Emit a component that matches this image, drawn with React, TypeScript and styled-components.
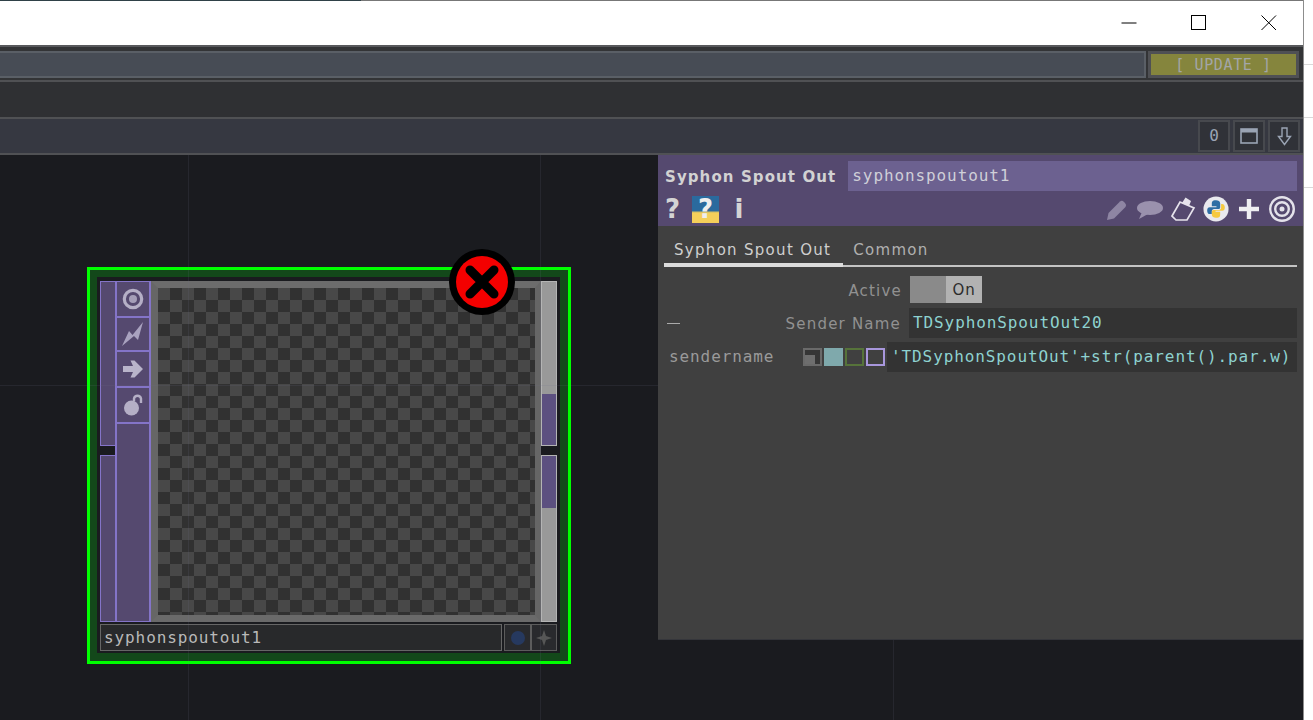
import React from "react"
import styled, { createGlobalStyle } from "styled-components"

const sans = `"DejaVu Sans", "Liberation Sans", sans-serif`
const mono = `"DejaVu Sans Mono", "Liberation Mono", monospace`

const GlobalStyle = createGlobalStyle`
  html, body { margin: 0; padding: 0; height: 720px; overflow: hidden; background: #fff; }
  #root { height: 720px; }
`

const Page = styled.div`
  display: flex;
  width: 1313px;
  height: 720px;
  overflow: hidden;
  background: #fff;
`
const Gutter = styled.div`
  flex: 1;
  display: flex;
  flex-direction: column;
`
const GutterRow = styled.div<{ $h: number }>`
  height: ${(p) => p.$h}px;
  box-sizing: border-box;
  border-bottom: 1px solid #d9d9d9;
`
const Window = styled.div`
  width: 1304px;
  height: 720px;
  flex: none;
  display: flex;
  flex-direction: column;
  box-sizing: border-box;
  border-right: 1px solid #8d8d8d;
`
const TitleBar = styled.div`
  height: 45px;
  flex: none;
  box-sizing: border-box;
  background: linear-gradient(to right, #2f4148 361px, #777 361px) top / 100% 1px no-repeat #fff;
  display: flex;
  justify-content: flex-end;
  align-items: center;
  padding-right: 26px;
  gap: 54px;
`
const WinIcon = styled.svg`
  width: 16px;
  height: 16px;
  display: block;
`
const ToolRowOne = styled.div`
  height: 35px;
  flex: none;
  box-sizing: border-box;
  background: #333436;
  border-top: 2px solid #58595c;
  padding: 4px 4px 0 0;
  display: flex;
  gap: 2px;
`
const PathField = styled.div`
  flex: 1;
  height: 27px;
  box-sizing: border-box;
  background: #474c55;
  border: 2px solid #5a5f66;
  border-left: none;
`
const UpdateButton = styled.div`
  width: 151px;
  height: 27px;
  box-sizing: border-box;
  border: 3px solid #4f5054;
  background: #85853d;
  color: #a3a6a8;
  font: 15px/23px ${mono};
  letter-spacing: 0.6px;
  text-align: center;
`
const ToolRowTwo = styled.div`
  height: 37px;
  flex: none;
  box-sizing: border-box;
  background: #2f3033;
  border-top: 2px solid #505154;
`
const ToolRowThree = styled.div`
  height: 38px;
  flex: none;
  box-sizing: border-box;
  background: #363841;
  border-top: 2px solid #505154;
  border-bottom: 2px solid #505154;
  padding: 1px 3px 0 0;
  display: flex;
  justify-content: flex-end;
  gap: 3px;
`
const ToolButton = styled.div`
  width: 32px;
  height: 32px;
  box-sizing: border-box;
  border: 2px solid #47494e;
  background: #303238;
  color: #9aa4b4;
  font: 16px/28px ${mono};
  text-align: center;
  display: flex;
  align-items: center;
  justify-content: center;
`
const Canvas = styled.div`
  position: relative;
  flex: 1;
  background: #1a1b1f;
  overflow: hidden;
`
const VLine = styled.div<{ $x: number }>`
  position: absolute;
  left: ${(p) => p.$x}px;
  top: 0;
  bottom: 0;
  width: 1px;
  background: rgba(110, 110, 145, 0.14);
  z-index: 2;
`
const HLine = styled.div<{ $y: number }>`
  position: absolute;
  top: ${(p) => p.$y}px;
  left: 0;
  right: 0;
  height: 1px;
  background: rgba(110, 110, 145, 0.14);
  z-index: 2;
`

/* operator node */
const Node = styled.div`
  position: absolute;
  left: 87px;
  top: 112px;
  width: 484px;
  height: 397px;
  box-sizing: border-box;
  border: 3px solid #00ff00;
  padding: 7px 8px 8px 7px;
  background: #13481a;
  z-index: 1;
`
const NodeInner = styled.div`
  height: 100%;
  box-sizing: border-box;
  background: #1a1b1f;
  padding: 4px 3px 2px;
  display: flex;
  flex-direction: column;
  gap: 2px;
`
const NodeBody = styled.div`
  height: 341px;
  display: grid;
  grid-template-columns: 15px 36px 390px 16px;
`
const Connectors = styled.div`
  display: flex;
  flex-direction: column;
  gap: 9px;
`
const InputTab = styled.div<{ $h: number }>`
  height: ${(p) => p.$h}px;
  box-sizing: border-box;
  background: #55496f;
  border: 1px solid #8474c8;
  border-right: none;
`
const OutputTab = styled.div<{ $h: number; $top: boolean }>`
  height: ${(p) => p.$h}px;
  box-sizing: border-box;
  background: #999;
  border: 1px solid #b4b4b4;
  display: flex;
  flex-direction: column;
  justify-content: ${(p) => (p.$top ? "flex-start" : "flex-end")};
`
const OutputFill = styled.div<{ $h: number }>`
  height: ${(p) => p.$h}px;
  background: #5c5080;
`
const IconColumn = styled.div`
  background: #55496f;
  border: solid #8474c8;
  border-width: 1px 2px 1px 2px;
  box-sizing: border-box;
  display: flex;
  flex-direction: column;
`
const IconCell = styled.div<{ $h: number }>`
  height: ${(p) => p.$h}px;
  flex: none;
  box-sizing: border-box;
  border-bottom: 2px solid #8474c8;
  display: flex;
  align-items: center;
  justify-content: center;
`
const Viewer = styled.div`
  box-sizing: border-box;
  border: solid #666;
  border-width: 7px 6px 7px 7px;
  border-top-color: #6c6c6c;
  border-bottom-color: #6a6a6a;
`
const Checker = styled.div`
  height: 100%;
  background: repeating-conic-gradient(#313131 0 25%, #484848 0 50%) 0 0 / 24px 24px;
`
const NodeFooter = styled.div`
  height: 27px;
  display: flex;
`
const NodeName = styled.div`
  width: 402px;
  margin-right: 2px;
  box-sizing: border-box;
  border: 1px solid #666;
  background: #28292b;
  color: #b9b9b9;
  font: 16px/25px ${mono};
  letter-spacing: 0.9px;
  padding-left: 3px;
`
const FooterButton = styled.div<{ $w: number }>`
  width: ${(p) => p.$w}px;
  box-sizing: border-box;
  border: 1px solid #5c5c5c;
  background: #292a2d;
  display: flex;
  align-items: center;
  justify-content: center;
`
const BlueDot = styled.div`
  width: 14px;
  height: 14px;
  border-radius: 50%;
  background: #26395f;
`
const ErrorBadge = styled.svg`
  position: absolute;
  left: 449px;
  top: 94px;
  width: 66px;
  height: 66px;
  z-index: 3;
`

/* parameter dialog */
const Panel = styled.div`
  position: absolute;
  left: 658px;
  top: 0;
  width: 645px;
  height: 485px;
  background: #404040;
  border-bottom: 1px solid #35363b;
  box-sizing: border-box;
  z-index: 4;
  display: flex;
  flex-direction: column;
`
const PanelHeader = styled.div`
  height: 71px;
  flex: none;
  box-sizing: border-box;
  background: #55496f;
  padding: 5px 6px 0 7px;
`
const TitleRow = styled.div`
  display: flex;
  align-items: center;
  height: 31px;
  gap: 12px;
`
const PanelTitle = styled.div`
  color: #d2d2d2;
  font: bold 15px/30px ${sans};
  letter-spacing: 1.1px;
  white-space: nowrap;
  padding-top: 3px;
`
const NameField = styled.div`
  flex: 1;
  height: 30px;
  background: #6c6190;
  color: #cfcfd8;
  font: 16px/30px ${mono};
  letter-spacing: 0.9px;
  padding-left: 4px;
`
const IconRow = styled.div`
  display: flex;
  align-items: center;
  justify-content: space-between;
  height: 34px;
  padding: 2px 2px 0 0;
  box-sizing: border-box;
`
const IconGroup = styled.div`
  display: flex;
  align-items: center;
`
const HelpGlyph = styled.span<{ $w: number }>`
  width: ${(p) => p.$w}px;
  color: #d4d4d4;
  font: bold 26px/30px ${sans};
  text-align: center;
`
const PythonHelp = styled.span`
  width: 27px;
  height: 27px;
  margin: 0 0 0 12px;
  background: linear-gradient(to bottom, #2a6a9e 0 54%, #f4cf5a 62% 100%);
  color: #eee;
  font: bold 26px/27px ${sans};
  text-align: center;
`
const HeaderIcon = styled.svg`
  width: 26px;
  height: 26px;
  margin-left: 7px;
  display: block;
`
const TabBar = styled.div`
  height: 41px;
  flex: none;
  margin: 0 6px;
  display: flex;
  align-items: flex-end;
  box-sizing: border-box;
  border-bottom: 2px solid #c4c4c4;
`
const Tab = styled.div<{ $active?: boolean }>`
  position: relative;
  height: 30px;
  padding: 0 12px 0 10px;
  color: ${(p) => (p.$active ? "#cfcfcf" : "#b0b0b0")};
  font: 15px/30px ${sans};
  letter-spacing: 1.3px;
  box-sizing: border-box;
  &::after {
    content: "";
    display: ${(p) => (p.$active ? "block" : "none")};
    position: absolute;
    left: 0;
    right: 0;
    bottom: -2px;
    height: 4px;
    background: #dcdcdc;
  }
`
const ParamRow = styled.div<{ $mt: number }>`
  display: flex;
  align-items: center;
  margin-top: ${(p) => p.$mt}px;
  margin-right: 6px;
`
const ParamLabel = styled.div<{ $w: number; $dy: number }>`
  width: ${(p) => p.$w}px;
  height: 27px;
  flex: none;
  box-sizing: border-box;
  text-align: right;
  color: #919191;
  font: 15px/26px ${sans};
  letter-spacing: 1.2px;
  white-space: nowrap;
  padding-top: ${(p) => p.$dy}px;
`
const Toggle = styled.div`
  margin-left: 8px;
  width: 72px;
  height: 27px;
  display: flex;
  background: #8a8a8a;
  justify-content: flex-end;
`
const ToggleOn = styled.div`
  width: 36px;
  background: #b2b2b2;
  color: #2c2c2c;
  font: 15px/28px ${sans};
  letter-spacing: 0.8px;
  text-align: center;
`
const ValueField = styled.div<{ $ml: number }>`
  flex: 1;
  height: 30px;
  margin-left: ${(p) => p.$ml}px;
  background: #333;
  color: #8ed2d0;
  font: 16px/30px ${mono};
  letter-spacing: 0.9px;
  padding-left: 4px;
  white-space: nowrap;
  overflow: hidden;
`
const Dash = styled.div`
  width: 13px;
  height: 1px;
  margin-left: 9px;
  flex: none;
  background: #aaa;
`
const ParamName = styled.div`
  width: 145px;
  flex: none;
  padding-left: 11px;
  box-sizing: border-box;
  color: #9a9a9a;
  font: 16px/30px ${mono};
  letter-spacing: 0.9px;
`
const ModeBoxes = styled.div`
  display: flex;
  gap: 2px;
`
const ModeBox = styled.div<{ $kind: "const" | "expr" | "bind" | "mode" }>`
  position: relative;
  width: 19px;
  height: 18px;
  box-sizing: border-box;
  border: 2px solid
    ${(p) => ({ const: "#6a6a6a", expr: "#7fa9ac", bind: "#56733a", mode: "#a897dc" })[p.$kind]};
  background: ${(p) => (p.$kind === "expr" ? "#7fa9ac" : p.$kind === "const" ? "#363636" : "transparent")};
  ${(p) =>
    p.$kind === "const" &&
    `
    &::after {
      content: "";
      position: absolute;
      left: 0;
      bottom: 0;
      width: 10px;
      height: 9px;
      background: #6e6e6e;
    }
  `}
`

export default function App() {
  return (
    <Page>
      <GlobalStyle />
      <Window>
        <TitleBar>
          <WinIcon viewBox="0 0 16 16">
            <path d="M0.5 8 H15.5" stroke="#000" strokeWidth="1" />
          </WinIcon>
          <WinIcon viewBox="0 0 16 16">
            <rect x="0.5" y="0.5" width="14" height="14" fill="none" stroke="#000" strokeWidth="1" />
          </WinIcon>
          <WinIcon viewBox="0 0 16 16">
            <path d="M0.5 0.5 L15 15 M15 0.5 L0.5 15" stroke="#000" strokeWidth="1" />
          </WinIcon>
        </TitleBar>
        <ToolRowOne>
          <PathField />
          <UpdateButton>[ UPDATE ]</UpdateButton>
        </ToolRowOne>
        <ToolRowTwo />
        <ToolRowThree>
          <ToolButton>0</ToolButton>
          <ToolButton>
            <svg width="18" height="16" viewBox="0 0 18 16">
              <rect x="1" y="1" width="16" height="14" fill="none" stroke="#9aa4b4" strokeWidth="1.6" />
              <rect x="1" y="1" width="16" height="3.5" fill="#9aa4b4" />
            </svg>
          </ToolButton>
          <ToolButton>
            <svg width="15" height="19" viewBox="0 0 15 19">
              <path d="M5 1 H10 V9.5 H13.5 L7.5 17.5 L1.5 9.5 H5 Z" fill="none" stroke="#9aa4b4" strokeWidth="1.4" />
            </svg>
          </ToolButton>
        </ToolRowThree>
        <Canvas>
          <VLine $x={188} />
          <VLine $x={540} />
          <VLine $x={893} />
          <HLine $y={230} />
          <Node>
            <NodeInner>
              <NodeBody>
                <Connectors>
                  <InputTab $h={165} />
                  <InputTab $h={167} />
                </Connectors>
                <IconColumn>
                  <IconCell $h={36}>
                    <svg width="22" height="22" viewBox="0 0 22 22">
                      <circle cx="11" cy="11" r="8.7" fill="none" stroke="#b5afc6" strokeWidth="3.2" />
                      <circle cx="11" cy="11" r="4" fill="#a59eb8" />
                    </svg>
                  </IconCell>
                  <IconCell $h={34}>
                    <svg width="24" height="26" viewBox="0 0 24 26">
                      <path d="M1 25 L8 10 L11.5 14 L22 1 L17 19 L13 15 Z" fill="#a9a2bf" />
                    </svg>
                  </IconCell>
                  <IconCell $h={36}>
                    <svg width="22" height="18" viewBox="0 0 22 18">
                      <path d="M1 6 H11 L8.5 0.5 H12.5 L21 9 L12.5 17.5 H8.5 L11 12 H1 Z" fill="#b9b4ca" />
                    </svg>
                  </IconCell>
                  <IconCell $h={36}>
                    <svg width="20" height="24" viewBox="0 0 20 24">
                      <path d="M11 8 V5.5 A3.6 3.6 0 0 1 18 5.5 V10" fill="none" stroke="#b5afc6" strokeWidth="2.4" />
                      <circle cx="8.5" cy="15" r="7.5" fill="#b5afc6" />
                    </svg>
                  </IconCell>
                </IconColumn>
                <Viewer>
                  <Checker />
                </Viewer>
                <Connectors>
                  <OutputTab $h={165} $top={false}>
                    <OutputFill $h={51} />
                  </OutputTab>
                  <OutputTab $h={167} $top>
                    <OutputFill $h={52} />
                  </OutputTab>
                </Connectors>
              </NodeBody>
              <NodeFooter>
                <NodeName>syphonspoutout1</NodeName>
                <FooterButton $w={27}>
                  <BlueDot />
                </FooterButton>
                <FooterButton $w={26}>
                  <svg width="16" height="16" viewBox="0 0 16 16">
                    <path d="M8 0 L10 6 L16 8 L10 10 L8 16 L6 10 L0 8 L6 6 Z" fill="#565656" />
                  </svg>
                </FooterButton>
              </NodeFooter>
            </NodeInner>
          </Node>
          <ErrorBadge viewBox="0 0 66 66">
            <circle cx="33" cy="33" r="33" fill="#000" />
            <circle cx="33" cy="33" r="26" fill="#f40000" />
            <path d="M21 21 L45 45 M45 21 L21 45" stroke="#000" strokeWidth="9" strokeLinecap="round" />
          </ErrorBadge>
          <Panel>
            <PanelHeader>
              <TitleRow>
                <PanelTitle>Syphon Spout Out</PanelTitle>
                <NameField>syphonspoutout1</NameField>
              </TitleRow>
              <IconRow>
                <IconGroup>
                  <HelpGlyph $w={15}>?</HelpGlyph>
                  <PythonHelp>?</PythonHelp>
                  <HelpGlyph $w={40}>i</HelpGlyph>
                </IconGroup>
                <IconGroup>
                  <HeaderIcon viewBox="0 0 26 26">
                    <path d="M3 24 L4.5 17 L16 5.5 Q18 4 20 6 L21 7 Q23 9 21.5 11 L10 22.5 Z" fill="#8e85a3" />
                  </HeaderIcon>
                  <HeaderIcon viewBox="0 0 26 26">
                    <ellipse cx="13" cy="12" rx="13" ry="7" fill="#9a91ad" />
                    <path d="M5 16 L2 23 L11 18 Z" fill="#9a91ad" />
                  </HeaderIcon>
                  <HeaderIcon viewBox="0 0 26 26">
                    <path d="M2 20 L10 6 L24 12 L17 24 L6 24 Z" fill="none" stroke="#e6e3ec" strokeWidth="1.7" />
                    <path d="M12 7 L15.5 1.5 L21 5 L19 10 Z" fill="#e6e3ec" />
                  </HeaderIcon>
                  <HeaderIcon viewBox="0 0 28 28">
                    <circle cx="14" cy="14" r="13.5" fill="#e9e9ee" />
                    <path d="M14 4.5 C9.5 4.5 9.5 6.5 9.5 9 V11 H14.5 V12 H7.5 C5 12 4.5 14 4.5 15.5 C4.5 18 5.5 19.5 7.5 19.5 H9.5 V16.5 C9.5 15 10.5 14 12 14 H16.5 C18 14 18.5 13 18.5 12 V8 C18.5 5.5 16.5 4.5 14 4.5 Z" fill="#2e6da4" />
                    <path d="M14 23.5 C18.5 23.5 18.5 21.5 18.5 19 V17 H13.5 V16 H20.5 C23 16 23.5 14 23.5 12.5 C23.5 10 22.5 8.5 20.5 8.5 H19.5 V12 C19.5 14 18.5 15 17 15 H11.5 C10 15 9.5 16 9.5 17 V20 C9.5 22.5 11.5 23.5 14 23.5 Z" fill="#f6c93f" />
                  </HeaderIcon>
                  <HeaderIcon viewBox="0 0 26 26">
                    <path d="M13 3 V23 M3 13 H23" stroke="#eeeef2" strokeWidth="4.4" />
                  </HeaderIcon>
                  <HeaderIcon viewBox="0 0 26 26">
                    <circle cx="13" cy="13" r="11.8" fill="none" stroke="#e4e2ea" strokeWidth="2.4" />
                    <circle cx="13" cy="13" r="6.8" fill="none" stroke="#e4e2ea" strokeWidth="2.4" />
                    <circle cx="13" cy="13" r="2.5" fill="#e4e2ea" />
                  </HeaderIcon>
                </IconGroup>
              </IconRow>
            </PanelHeader>
            <TabBar>
              <Tab $active>Syphon Spout Out</Tab>
              <Tab>Common</Tab>
            </TabBar>
            <ParamRow $mt={9}>
              <ParamLabel $w={244} $dy={2}>Active</ParamLabel>
              <Toggle>
                <ToggleOn>On</ToggleOn>
              </Toggle>
            </ParamRow>
            <ParamRow $mt={5}>
              <Dash />
              <ParamLabel $w={221} $dy={1}>Sender Name</ParamLabel>
              <ValueField $ml={8}>TDSyphonSpoutOut20</ValueField>
            </ParamRow>
            <ParamRow $mt={4}>
              <ParamName>sendername</ParamName>
              <ModeBoxes>
                <ModeBox $kind="const" />
                <ModeBox $kind="expr" />
                <ModeBox $kind="bind" />
                <ModeBox $kind="mode" />
              </ModeBoxes>
              <ValueField $ml={2}>'TDSyphonSpoutOut'+str(parent().par.w)</ValueField>
            </ParamRow>
          </Panel>
        </Canvas>
      </Window>
      <Gutter>
        <GutterRow $h={65} />
        <GutterRow $h={53} />
        <GutterRow $h={70} />
      </Gutter>
    </Page>
  )
}
